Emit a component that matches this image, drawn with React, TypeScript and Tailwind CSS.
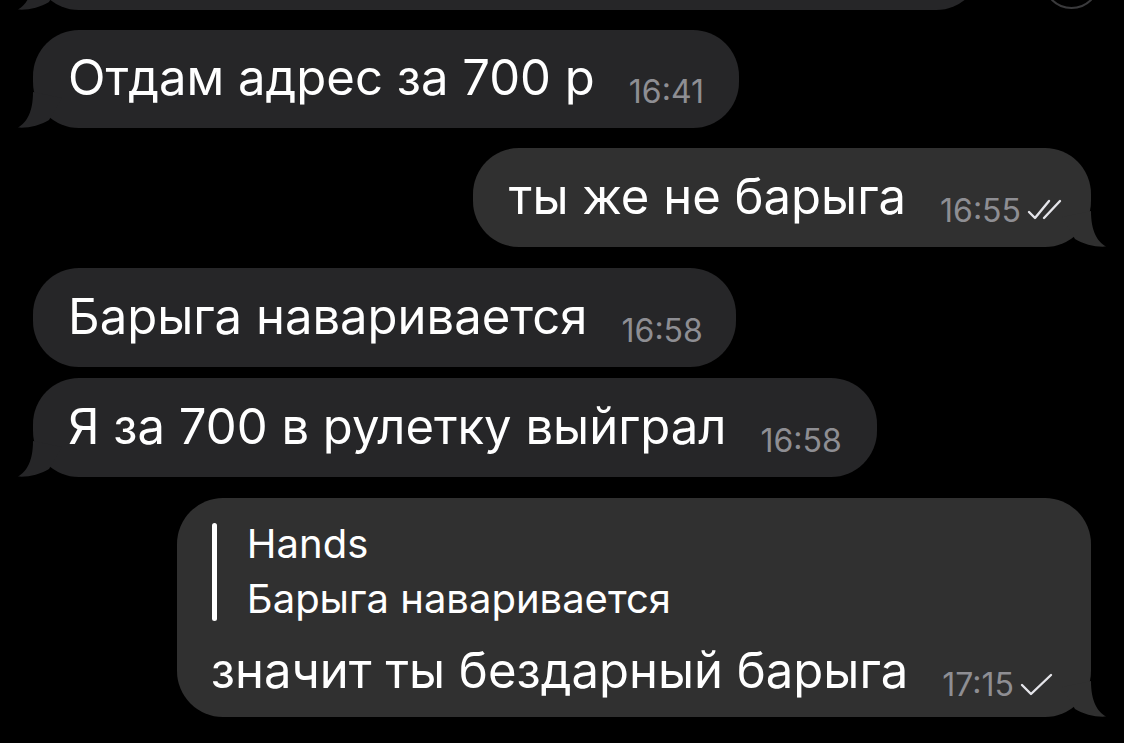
import React from "react";

// ─── Tail ───────────────────────────────────────────────

function Tail({ side, color }: { side: "in" | "out"; color: string }) {
  return (
    <svg
      width="50"
      height="40"
      viewBox="0 0 50 40"
      className={
        side === "in"
          ? "absolute left-[-15px] bottom-0"
          : "absolute right-[-15px] bottom-0 -scale-x-100"
      }
    >
      <path
        d="M15 4 C15 24 9 34 0 39.6 C10 40.4 22 37.5 31 32 L44 10 Z"
        fill={color}
      />
    </svg>
  );
}

function Check({ double }: { double?: boolean }) {
  return double ? (
    <svg width="38" height="24" viewBox="0 0 38 24" className="inline-block ml-[6px] align-[-9px]">
      <path d="M2 13 L8 19 L22 2" stroke="#e5e5ea" strokeWidth="2.4" fill="none" strokeLinecap="round" strokeLinejoin="round" />
      <path d="M17 19 L33 2" stroke="#e5e5ea" strokeWidth="2.4" fill="none" strokeLinecap="round" />
    </svg>
  ) : (
    <svg width="34" height="24" viewBox="0 0 34 24" className="inline-block ml-[6px] align-[-9px]">
      <path d="M2 12 L11 21 L31 2" stroke="#e5e5ea" strokeWidth="2.4" fill="none" strokeLinecap="round" strokeLinejoin="round" />
    </svg>
  );
}

// ─── Bubble ─────────────────────────────────────────────

const IN_BG = "#262628";
const OUT_BG = "#303030";

interface BubbleProps {
  side: "in" | "out";
  tail?: boolean;
  className?: string;
  children: React.ReactNode;
}

function Bubble({ side, tail, className = "", children }: BubbleProps) {
  const bg = side === "in" ? "bg-[#262628]" : "bg-[#303030]";
  return (
    <div
      className={`relative rounded-[46px] ${bg} ${
        side === "in" ? "self-start" : "self-end"
      } ${className}`}
    >
      {tail && <Tail side={side} color={side === "in" ? IN_BG : OUT_BG} />}
      <div className="relative">{children}</div>
    </div>
  );
}

function Line({ text, time, check }: { text: string; time: string; check?: "single" | "double" }) {
  return (
    <p className="whitespace-nowrap text-[49px] leading-[56px] text-white">
      {text}
      <span className="ml-[34px] text-[32px] text-[#8e8e93] align-[-8px] leading-[30px]">{time}</span>
      {check && <Check double={check === "double"} />}
    </p>
  );
}

// ─── App ────────────────────────────────────────────────

export default function App() {
  return (
    <div className="relative h-[743px] w-[1124px] overflow-hidden bg-black font-['Inter','Noto_Sans',sans-serif]">
      {/* selection circle peeking from above */}
      <div className="absolute left-[1043px] top-[-48px] h-[57px] w-[57px] rounded-full border-2 border-[#3a3a3c]" />

      <div className="flex flex-col px-[33px]">
        {/* previous message, cut off */}
        <Bubble side="in" tail className="mt-[-88px] h-[98px] w-[949px]">
          <div />
        </Bubble>

        <Bubble side="in" tail className="mt-[20px] h-[98px] pl-[35px] pr-[35px] pt-[20px]">
          <Line text="Отдам адрес за 700 р" time="16:41" />
        </Bubble>

        <Bubble side="out" tail className="mt-[20px] h-[99px] pl-[36px] pr-[26px] pt-[21px]">
          <Line text="ты же не барыга" time="16:55" check="double" />
        </Bubble>

        <Bubble side="in" className="mt-[21px] h-[99px] pl-[35px] pr-[33px] pt-[21px]">
          <Line text="Барыга наваривается" time="16:58" />
        </Bubble>

        <Bubble side="in" tail className="mt-[11px] h-[99px] pl-[35px] pr-[35px] pt-[21px]">
          <Line text="Я за 700 в рулетку выйграл" time="16:58" />
        </Bubble>

        <Bubble side="out" tail className="mt-[21px] pl-[34px] pr-[37px] pt-[18px] pb-[17px] rounded-[42px]">
          <div className="flex">
            <div className="ml-[1px] mt-[7px] mb-[5px] w-[5px] rounded-full bg-white" />
            <div className="ml-[30px] text-[40px] leading-[55px] text-white">
              <div>Hands</div>
              <div>Барыга наваривается</div>
            </div>
          </div>
          <div className="mt-[17px]">
            <Line text="значит ты бездарный барыга" time="17:15" check="single" />
          </div>
        </Bubble>
      </div>
    </div>
  );
}
